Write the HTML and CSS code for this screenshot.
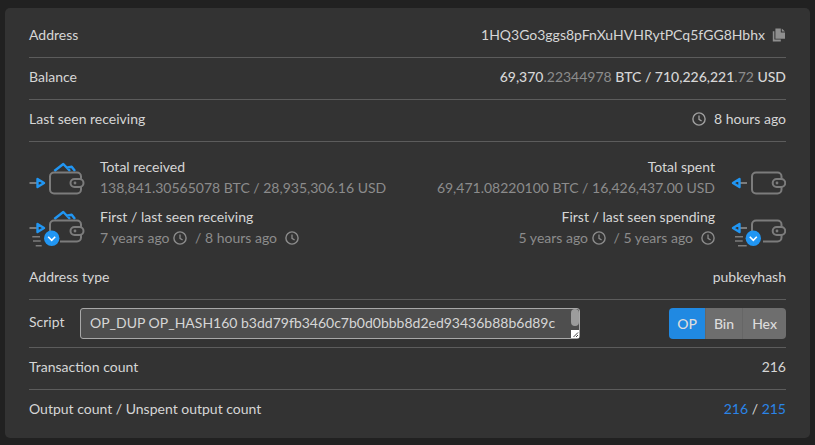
FILE: index.html
```html
<!DOCTYPE html>
<html lang="en">
<head>
<meta charset="utf-8">
<title>Address</title>
<link rel="stylesheet" href="styles.css">
</head>
<body>
<svg class="defs" width="0" height="0" aria-hidden="true">
  <defs>
    <symbol id="clock" viewBox="0 0 14 14">
      <circle cx="7" cy="7" r="6.100" fill="none" stroke="currentColor" stroke-width="1.400"/>
      <path d="M7 3.400V7.400L9.600 9" fill="none" stroke="currentColor" stroke-width="1.300"/>
    </symbol>
    <symbol id="cards" viewBox="0 0 58 44">
      <path d="M25.300 12L34.300 5L41 12M37.700 8.700L42.700 7.700L46 12" fill="none" stroke="#2196f3" stroke-width="2.400" stroke-linejoin="round"/>
    </symbol>
  </defs>
</svg>
<main class="card">
  <div class="row">
    <span>Address</span>
    <span class="value addr">1HQ3Go3ggs8pFnXuHVHRytPCq5fGG8Hbhx
      <svg class="copy" viewBox="0 0 14 14" width="14" height="14" aria-hidden="true">
        <path d="M0.800 3.200H2.400V11.600H8.800V13.400H0.800Z" fill="#8f8f8f"/>
        <path d="M3.400 0.500H8.800V4.400H13V10.800H3.400Z" fill="#8f8f8f"/>
        <path d="M9.800 0.500L13 3.500H9.800Z" fill="#8f8f8f"/>
      </svg>
    </span>
  </div>
  <div class="row">
    <span>Balance</span>
    <span class="value bold">69,370<span class="dim">.22344978</span> BTC / 710,226,221<span class="dim">.72</span> USD</span>
  </div>
  <div class="row">
    <span>Last seen receiving</span>
    <span class="value with-icon"><svg class="clock" aria-hidden="true"><use href="#clock"/></svg> 8 hours ago</span>
  </div>

  <section class="stats">
    <div class="stat">
      <svg class="wallet" viewBox="0 0 58 44" aria-hidden="true">
        <use href="#cards" width="58" height="44"/>
        <rect x="21" y="13.500" width="31" height="21" rx="4" fill="none" stroke="#7c7c7c" stroke-width="2"/>
        <rect x="41.500" y="20" width="13" height="8" rx="4" fill="#333" stroke="#7c7c7c" stroke-width="2"/>
        <circle cx="46" cy="24" r="1.400" fill="#7c7c7c"/>
        <path d="M0.500 24H8" stroke="#7c7c7c" stroke-width="2"/>
        <path d="M8.500 20L15 24L8.500 28Z" fill="none" stroke="#2196f3" stroke-width="2.400" stroke-linejoin="round"/>
      </svg>
      <div class="stat-text">
        <div class="stat-title">Total received</div>
        <div class="stat-sub">138,841.30565078 BTC / 28,935,306.16 USD</div>
      </div>
    </div>
    <div class="stat stat-right">
      <div class="stat-text">
        <div class="stat-title">Total spent</div>
        <div class="stat-sub">69,471.08220100 BTC / 16,426,437.00 USD</div>
      </div>
      <svg class="wallet" viewBox="0 0 58 44" aria-hidden="true">
        <rect x="24" y="13.500" width="29.500" height="21" rx="4" fill="none" stroke="#7c7c7c" stroke-width="2"/>
        <rect x="44.700" y="20" width="12.500" height="8" rx="4" fill="#333" stroke="#7c7c7c" stroke-width="2"/>
        <circle cx="49" cy="24" r="1.400" fill="#7c7c7c"/>
        <path d="M12 24H19" stroke="#7c7c7c" stroke-width="2"/>
        <path d="M11.500 20L5 24L11.500 28Z" fill="none" stroke="#2196f3" stroke-width="2.400" stroke-linejoin="round"/>
      </svg>
    </div>
    <div class="stat stat-low">
      <svg class="wallet" viewBox="0 0 58 44" aria-hidden="true">
        <use href="#cards" width="58" height="44"/>
        <path d="M21 24V17.500A4 4 0 0 1 25 13.500H48A4 4 0 0 1 52 17.500V30.500A4 4 0 0 1 48 34.500H31" fill="none" stroke="#7c7c7c" stroke-width="2"/>
        <rect x="41.500" y="20" width="13" height="8" rx="4" fill="#333" stroke="#7c7c7c" stroke-width="2"/>
        <circle cx="46" cy="24" r="1.400" fill="#7c7c7c"/>
        <path d="M0.500 21H8" stroke="#7c7c7c" stroke-width="2"/>
        <path d="M8.500 17L15 21L8.500 25Z" fill="none" stroke="#2196f3" stroke-width="2.400" stroke-linejoin="round"/>
        <path d="M3.300 29.700H11M4 34H11.700M6.700 38.700H12.700" stroke="#7c7c7c" stroke-width="1.500"/>
        <circle cx="22.700" cy="31.300" r="7.700" fill="#2196f3"/>
        <path d="M19.200 29.800L22.700 33.300L26.200 29.800" fill="none" stroke="#fff" stroke-width="1.600"/>
      </svg>
      <div class="stat-text">
        <div class="stat-title">First / last seen receiving</div>
        <div class="stat-sub with-icon">7 years ago <svg class="clock" aria-hidden="true"><use href="#clock"/></svg><span class="sep">/ 8 hours ago</span> <svg class="clock far" aria-hidden="true"><use href="#clock"/></svg></div>
      </div>
    </div>
    <div class="stat stat-right stat-low">
      <div class="stat-text">
        <div class="stat-title">First / last seen spending</div>
        <div class="stat-sub with-icon">5 years ago <svg class="clock" aria-hidden="true"><use href="#clock"/></svg><span class="sep">/ 5 years ago</span> <svg class="clock far" aria-hidden="true"><use href="#clock"/></svg></div>
      </div>
      <svg class="wallet" viewBox="0 0 58 44" aria-hidden="true">
        <path d="M24 24V17.500A4 4 0 0 1 28 13.500H49.500A4 4 0 0 1 53.500 17.500V30.500A4 4 0 0 1 49.500 34.500H35" fill="none" stroke="#7c7c7c" stroke-width="2"/>
        <rect x="44.700" y="20" width="12.500" height="8" rx="4" fill="#333" stroke="#7c7c7c" stroke-width="2"/>
        <circle cx="49" cy="24" r="1.400" fill="#7c7c7c"/>
        <path d="M12 21H19" stroke="#7c7c7c" stroke-width="2"/>
        <path d="M11.500 17L5 21L11.500 25Z" fill="none" stroke="#2196f3" stroke-width="2.400" stroke-linejoin="round"/>
        <path d="M7 29.700H15M7 34H14.700M10 38.700H18.700" stroke="#7c7c7c" stroke-width="1.500"/>
        <circle cx="25.300" cy="31.300" r="7.700" fill="#2196f3"/>
        <path d="M21.800 29.800L25.300 33.300L28.800 29.800" fill="none" stroke="#fff" stroke-width="1.600"/>
      </svg>
    </div>
  </section>

  <div class="row row-type">
    <span>Address type</span>
    <span class="value plain">pubkeyhash</span>
  </div>
  <div class="row row-script">
    <span class="script-label">Script</span>
    <div class="script-wrap">
      <textarea class="script-box" readonly>OP_DUP OP_HASH160 b3dd79fb3460c7b0d0bbb8d2ed93436b88b6d89c OP_EQUALVERIFY OP_CHECKSIG</textarea>
      <span class="thumb"></span>
      <svg class="grip" viewBox="0 0 8 8" width="8" height="8" aria-hidden="true">
        <rect width="8" height="8" fill="#fff"/>
        <path d="M2.500 7L7 2.500M5 7L7 5" stroke="#444" stroke-width="1"/>
      </svg>
    </div>
    <div class="btn-group">
      <span class="btn active">OP</span>
      <span class="btn">Bin</span>
      <span class="btn">Hex</span>
    </div>
  </div>
  <div class="row">
    <span>Transaction count</span>
    <span class="value">216</span>
  </div>
  <div class="row row-last">
    <span>Output count / Unspent output count</span>
    <span class="value"><span class="link">216</span> / <span class="link">215</span></span>
  </div>
</main>
</body>
</html>
```

FILE: styles.css
```css
* { box-sizing: border-box; }
html, body { height: 100%; }
body {
  margin: 0;
  padding: 8px 5px 0;
  background: #212121;
  color: #d6d6d6;
  font: 14px/20px Lato, sans-serif;
  overflow: hidden;
}
.defs { position: absolute; }
.card {
  background: #333;
  border-radius: 5px;
  height: 430px;
  padding: 8px 24px 0;
}
.row {
  display: flex;
  align-items: center;
  justify-content: space-between;
  height: 42px;
  padding-bottom: 4px;
  border-bottom: 1px solid #5c5c5c;
}
.row-last { border-bottom: 0; }
.value { color: #d6d6d6; display: inline-flex; align-items: center; white-space: pre; }
.bold { font-weight: 500; display: inline; }
.dim { color: #8c8c8c; font-weight: 400; }
.addr { gap: 7px; white-space: normal; }
.copy { display: block; }
.with-icon { display: inline-flex; align-items: center; white-space: pre; }
.clock { width: 14px; height: 14px; color: #a0a0a0; margin-right: 4px; display: block; }
.stats {
  display: grid;
  grid-template-columns: 1fr 1fr;
  grid-auto-rows: 50px;
  height: 114px;
  padding-top: 15px;
}
.stat { display: flex; align-items: flex-start; gap: 13px; }
.stat-right { justify-content: flex-end; }
.stat-right .stat-text { text-align: right; }
.wallet { width: 58px; height: 44px; margin-top: 2px; flex: none; }
.stat-low .wallet { margin-top: 0; }
.stat-title { color: #d6d6d6; }
.stat-sub { color: #8c8c8c; margin-top: 1px; }
.stat-sub .clock { color: #8c8c8c; margin: 0; }
.stat-sub .sep { margin-left: 8px; }
.stat-sub .far { margin-left: 8px; }
.stat-right .stat-sub { justify-content: flex-end; }
.row-type { height: 44px; padding-bottom: 2px; }
.row-script { height: 48px; justify-content: flex-start; padding-bottom: 0; }
.script-label { width: 51px; flex: none; padding-bottom: 3px; }
.script-wrap { position: relative; width: 500px; height: 31px; flex: none; }
.script-box {
  display: block;
  width: 100%;
  height: 100%;
  resize: none;
  background: #4e4e4e;
  color: #d6d6d6;
  border: 1px solid #a8a8a8;
  border-radius: 3px;
  padding: 3px 9px;
  font: 14px/21px Lato, sans-serif;
  overflow: hidden;
  outline: 0;
}
.thumb {
  position: absolute;
  top: 1px;
  right: 1px;
  width: 8px;
  height: 17px;
  background: #9c9c9c;
  border-radius: 4px;
}
.grip { position: absolute; right: 1px; bottom: 1px; display: block; }
.btn-group {
  display: flex;
  margin-left: auto;
  height: 31px;
  border-radius: 4px;
  overflow: hidden;
  font-weight: 500;
}
.btn {
  display: flex;
  align-items: center;
  padding: 0 8px;
  background: #6e6e6e;
  color: #dcdcdc;
  border-left: 1px solid #666;
}
.btn:last-child { padding: 0 9px; }
.btn.active { background: #2089e2; border-left: 0; }
.link { color: #2a85e8; }
```
